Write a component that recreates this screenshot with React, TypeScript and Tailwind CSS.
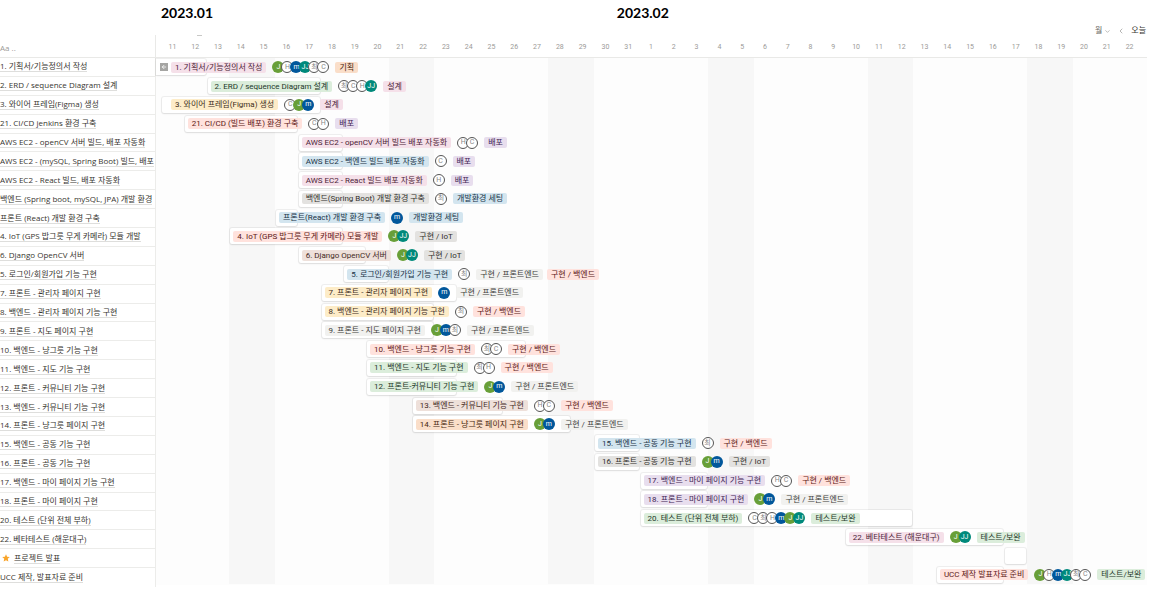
import React from "react";
import { ArrowLeft, ChevronDown, ChevronLeft } from "lucide-react";

const tones = {
  pink: "bg-[#f5e0e9] text-[#4c2337]",
  green: "bg-[#dbeddb] text-[#1c3829]",
  yellow: "bg-[#fdecc8] text-[#402c1b]",
  red: "bg-[#ffe2dd] text-[#5d1715]",
  blue: "bg-[#d3e5ef] text-[#183347]",
  gray: "bg-[#e3e2e0] text-[#32302c]",
  purple: "bg-[#e8deee] text-[#412454]",
  orange: "bg-[#fadec9] text-[#49290e]",
  brown: "bg-[#eee0da] text-[#442a1e]",
  light: "bg-[#f1f1ef] text-[#40403c]",
};

type Tone = keyof typeof tones;
type Label = [string, Tone];

interface Task {
  name: string;
  starred?: boolean;
  start: number;
  end: number;
  clipped?: boolean;
  inset?: boolean;
  label?: Label;
  people?: string[];
  stages?: Label[];
}

const PLAN: Label = ["기획", "orange"];
const DESIGN: Label = ["설계", "pink"];
const DEPLOY: Label = ["배포", "purple"];
const SETUP: Label = ["개발환경 세팅", "blue"];
const IOT: Label = ["구현 / IoT", "gray"];
const FRONT: Label = ["구현 / 프론트엔드", "light"];
const BACK: Label = ["구현 / 백엔드", "red"];
const TEST: Label = ["테스트/보완", "green"];

// start and end are inclusive day offsets from January 11
const tasks: Task[] = [
  { name: "1. 기획서/기능정의서 작성", start: 0, end: 1, clipped: true, label: ["1. 기획서/기능정의서 작성", "pink"], people: ["J", "H", "m", "JJ", "최", "C"], stages: [PLAN] },
  { name: "2. ERD / sequence Diagram 설계", start: 2, end: 6, label: ["2. ERD / sequence Diagram 설계", "green"], people: ["최", "C", "H", "JJ"], stages: [DESIGN] },
  { name: "3. 와이어 프레임(Figma) 생성", start: 0, end: 6, inset: true, label: ["3. 와이어 프레임(Figma) 생성", "yellow"], people: ["C", "J", "m"], stages: [DESIGN] },
  { name: "21. CI/CD jenkins 환경 구축", start: 1, end: 5, label: ["21. CI/CD (빌드 배포) 환경 구축", "red"], people: ["C", "H"], stages: [DEPLOY] },
  { name: "AWS EC2 - openCV 서버 빌드, 배포 자동화", start: 6, end: 7, label: ["AWS EC2 - openCV 서버 빌드 배포 자동화", "pink"], people: ["H", "C"], stages: [DEPLOY] },
  { name: "AWS EC2 - (mySQL, Spring Boot) 빌드, 배포", start: 6, end: 7, label: ["AWS EC2 - 백엔드 빌드 배포 자동화", "blue"], people: ["C"], stages: [DEPLOY] },
  { name: "AWS EC2 - React 빌드, 배포 자동화", start: 6, end: 7, label: ["AWS EC2 - React 빌드 배포 자동화", "pink"], people: ["H"], stages: [DEPLOY] },
  { name: "백엔드 (Spring boot, mySQL, JPA) 개발 환경", start: 6, end: 7, label: ["백엔드(Spring Boot) 개발 환경 구축", "gray"], people: ["최"], stages: [SETUP] },
  { name: "프론트 (React) 개발 환경 구축", start: 5, end: 5, label: ["프론트(React) 개발 환경 구축", "blue"], people: ["m"], stages: [SETUP] },
  { name: "4. IoT (GPS 밥그릇 무게 카메라) 모듈 개발", start: 3, end: 7, label: ["4. IoT (GPS 밥그릇 무게 카메라) 모듈 개발", "red"], people: ["J", "JJ"], stages: [IOT] },
  { name: "6. Django OpenCV 서버", start: 6, end: 8, label: ["6. Django OpenCV 서버", "brown"], people: ["J", "JJ"], stages: [IOT] },
  { name: "5. 로그인/회원가입 기능 구현", start: 8, end: 9, label: ["5. 로그인/회원가입 기능 구현", "blue"], people: ["최"], stages: [FRONT, BACK] },
  { name: "7. 프론트 - 관리자 페이지 구현", start: 7, end: 12, label: ["7. 프론트 - 관리자 페이지 구현", "yellow"], people: ["m"], stages: [FRONT] },
  { name: "8. 백엔드 - 관리자 페이지 기능 구현", start: 7, end: 11, label: ["8. 백엔드 - 관리자 페이지 기능 구현", "yellow"], people: ["최"], stages: [BACK] },
  { name: "9. 프론트 - 지도 페이지 구현", start: 7, end: 11, label: ["9. 프론트 - 지도 페이지 구현", "light"], people: ["J", "m", "최"], stages: [FRONT] },
  { name: "10. 백엔드 - 냥그릇 기능 구현", start: 9, end: 15, label: ["10. 백엔드 - 냥그릇 기능 구현", "red"], people: ["최", "C"], stages: [BACK] },
  { name: "11. 백엔드 - 지도 기능 구현", start: 9, end: 12, label: ["11. 백엔드 - 지도 기능 구현", "green"], people: ["최", "H"], stages: [BACK] },
  { name: "12. 프론트 - 커뮤니티 기능 구현", start: 9, end: 12, label: ["12. 프론트-커뮤니티 기능 구현", "green"], people: ["J", "m"], stages: [FRONT] },
  { name: "13. 백엔드 - 커뮤니티 기능 구현", start: 11, end: 14, label: ["13. 백엔드 - 커뮤니티 기능 구현", "brown"], people: ["H", "C"], stages: [BACK] },
  { name: "14. 프론트 - 냥그릇 페이지 구현", start: 11, end: 17, label: ["14. 프론트 - 냥그릇 페이지 구현", "orange"], people: ["J", "m"], stages: [FRONT] },
  { name: "15. 백엔드 - 공동 기능 구현", start: 19, end: 20, label: ["15. 백엔드 - 공동 기능 구현", "blue"], people: ["최"], stages: [BACK] },
  { name: "16. 프론트 - 공동 기능 구현", start: 19, end: 20, label: ["16. 프론트 - 공동 기능 구현", "gray"], people: ["J", "m"], stages: [IOT] },
  { name: "17. 백엔드 - 마이 페이지 기능 구현", start: 21, end: 23, label: ["17. 백엔드 - 마이 페이지 기능 구현", "purple"], people: ["H", "C"], stages: [BACK] },
  { name: "18. 프론트 - 마이 페이지 구현", start: 21, end: 23, label: ["18. 프론트 - 마이 페이지 구현", "purple"], people: ["J", "m"], stages: [FRONT] },
  { name: "20. 테스트 (단위 전체 부하)", start: 21, end: 32, label: ["20. 테스트 (단위 전체 부하)", "green"], people: ["C", "최", "H", "m", "J", "JJ"], stages: [TEST] },
  { name: "22. 베타테스트 (해운대구)", start: 30, end: 36, label: ["22. 베타테스트 (해운대구)", "pink"], people: ["J", "JJ"], stages: [TEST] },
  { name: "프로젝트 발표", starred: true, start: 37, end: 37 },
  { name: "UCC 제작, 발표자료 준비", start: 34, end: 36, label: ["UCC 제작 발표자료 준비", "red"], people: ["J", "H", "m", "JJ", "최", "C"], stages: [TEST] },
];

const days = Array.from({ length: 43 }, (_, i) => (i < 21 ? i + 11 : i - 20));
const weekends = [3, 10, 17, 24, 31, 38];

const avatarTones: Record<string, string> = {
  J: "bg-[#689f38] text-white",
  m: "bg-[#01579b] text-white",
  JJ: "bg-[#00897b] text-white",
};

function Avatar({ who }: { who: string }) {
  return (
    <span
      className={`-ml-[3px] flex size-3 shrink-0 items-center justify-center rounded-full text-[7px] leading-none first:ml-0 ${
        avatarTones[who] ?? "border border-[#555] bg-white text-[#888]"
      }`}
    >
      {who}
    </span>
  );
}

function Tag({ label: [text, tone] }: { label: Label }) {
  return <span className={`h-[11px] shrink-0 rounded-[2px] px-1 text-[8px] leading-[11px] ${tones[tone]}`}>{text}</span>;
}

function Bar({ task, row }: { task: Task; row: number }) {
  const edge = task.clipped ? "-ml-[5px] rounded-r-[2px] pl-1" : task.inset ? "ml-px rounded-[2px] pl-[9px]" : "ml-px rounded-[2px] pl-[3px]";
  return (
    <div
      className={`mr-px flex h-4 min-w-0 items-center gap-[6px] self-center bg-white whitespace-nowrap shadow-[0_0_0_1px_rgba(15,15,15,0.06),0_1px_2px_rgba(15,15,15,0.08)] ${edge}`}
      style={{ gridRow: row, gridColumn: `${task.start + 1} / ${task.end + 2}` }}
    >
      {task.clipped && (
        <button aria-label="시작일로 이동" className="-mr-[3px] flex size-2 shrink-0 items-center justify-center bg-[#a5a5a3] text-white">
          <ArrowLeft className="size-[6px]" strokeWidth={3} />
        </button>
      )}
      {task.label && <Tag label={task.label} />}
      {task.people && (
        <span className="flex shrink-0">
          {task.people.map((who) => (
            <Avatar key={who} who={who} />
          ))}
        </span>
      )}
      {task.stages && (
        <span className="flex shrink-0 gap-1">
          {task.stages.map((stage) => (
            <Tag key={stage[0]} label={stage} />
          ))}
        </span>
      )}
    </div>
  );
}

const dayGrid = "grid grid-cols-[repeat(43,minmax(0,1fr))] pl-[5px] pr-[6px]";

export default function App() {
  return (
    <main className="flex min-h-[591px] items-start overflow-hidden bg-white pr-[2px] text-[#37352f]">
      <section aria-label="작업 목록" className="w-[156px] shrink-0 pt-[35px] font-['Open_Sans','Noto_Sans_CJK_KR',sans-serif]">
        <div className="flex h-[23px] items-end border-r border-b border-[#e9e9e7] pb-[4px] text-[8px] leading-[10px] text-[#9b9a97]">Aa ..</div>
        <ul className="grid min-h-[529px] auto-rows-fr border-r border-[#ececea]">
          {tasks.map((task) => (
            <li key={task.name} className="flex min-w-0 items-center overflow-hidden border-b border-[#ececea] last:border-b-0">
              {task.starred && (
                <svg viewBox="0 0 24 24" className="mr-1 ml-[2px] size-2 shrink-0" fill="#f9a52b" aria-hidden="true">
                  <path d="M12 1l3.3 7.4 8 .8-6 5.4 1.7 7.9-7-4.1-7 4.1 1.7-7.9-6-5.4 8-.8z" />
                </svg>
              )}
              <a href="#" className="border-b border-[#dededc] text-[8px] leading-[10px] whitespace-nowrap">
                {task.name}
              </a>
            </li>
          ))}
        </ul>
      </section>

      <section aria-label="타임라인" className="min-w-0 flex-1 font-[Roboto,'Noto_Sans_CJK_KR',sans-serif]">
        <div className={`${dayGrid} h-[26px] items-center font-[Lato,sans-serif] text-[14px] leading-5 font-bold whitespace-nowrap text-black`}>
          <h2 className="col-start-1">2023.01</h2>
          <h2 className="col-start-21">2023.02</h2>
        </div>
        <div className="flex h-[10px] items-center justify-end gap-[6px] pr-px text-[8px] leading-[10px]">
          <span className="mr-auto ml-[41px] h-px w-[5px] self-end bg-[#c8c8c6]" />
          <button className="flex items-center gap-[2px] text-[#6b6a66]">
            월
            <ChevronDown className="size-[7px] text-[#91918e]" />
          </button>
          <button aria-label="이전">
            <ChevronLeft className="size-2 text-[#91918e]" />
          </button>
          <button>오늘</button>
        </div>
        <div className={`${dayGrid} h-[22px] items-center border-b border-[#e9e9e7] text-center text-[7px] leading-[10px] text-[#9b9a97]`}>
          {days.map((day, i) => (
            <span key={i}>{day}</span>
          ))}
        </div>
        <div className={`${dayGrid} min-h-[527px] grid-rows-[repeat(28,minmax(0,1fr))] bg-[#fdfdfd] pb-px`}>
          {weekends.map((first) => (
            <div key={first} className="bg-[#f7f7f7]" style={{ gridRow: "1 / -1", gridColumn: `${first + 1} / ${first + 3}` }} />
          ))}
          {tasks.map((task, i) => (
            <Bar key={task.name} task={task} row={i + 1} />
          ))}
        </div>
      </section>
    </main>
  );
}
